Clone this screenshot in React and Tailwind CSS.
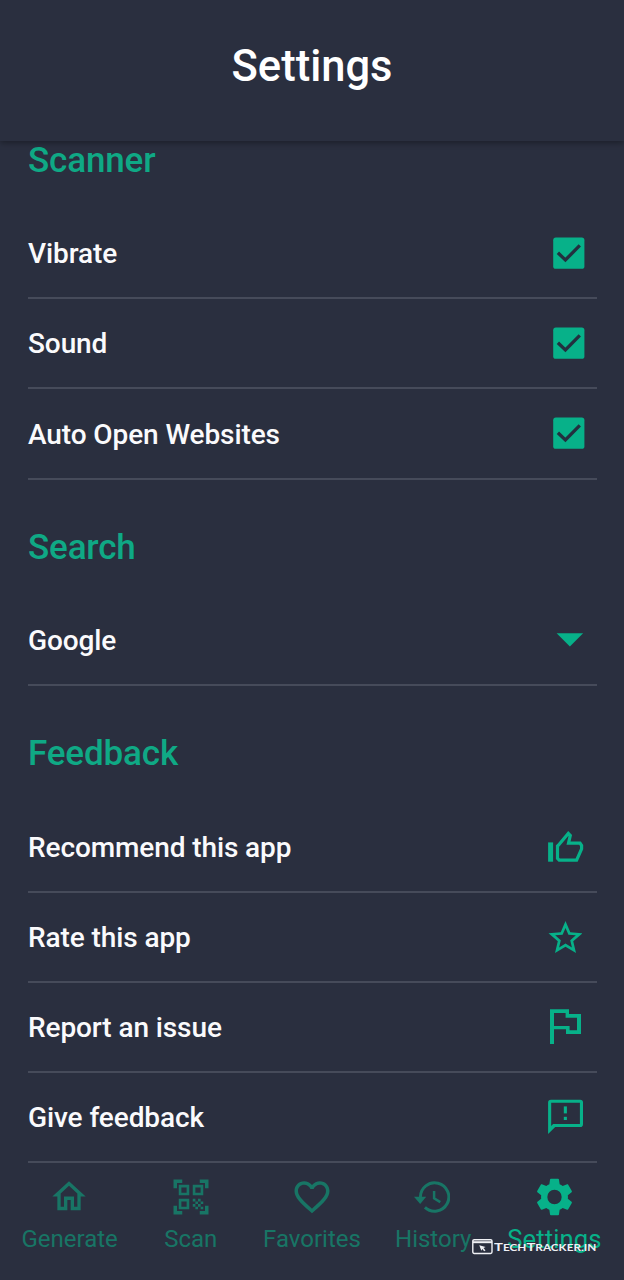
import React from "react";

function Icon({ box, className, children }) {
  return (
    <svg viewBox={box} className={className} fill="currentColor" preserveAspectRatio="none" aria-hidden="true">
      {children}
    </svg>
  );
}

const CheckBox = () => (
  <Icon box="0 0 32 32" className="mr-[12px] h-8 w-8">
    <rect x="0.2" y="0.6" width="31.2" height="31.2" rx="2.6" />
    <path d="M4.9 15.8L12.4 23L26.8 8.4" fill="none" stroke="#232f3f" strokeWidth="3.3" />
  </Icon>
);

const Caret = () => (
  <Icon box="0 0 28 14" className="mr-[13px] h-[14px] w-[28px]">
    <path d="M0.6 0.3H27.1L13.9 13.6Z" />
  </Icon>
);

const ThumbUp = () => (
  <Icon box="0 0 36 32" className="mr-[13px] h-8 w-9">
    <rect x="0.1" y="12.4" width="5" height="19.3" />
    <path
      d="M10.4 15.2L20.3 3.4L22.3 5.4L20.5 13.2H32L33.6 15.6V18.9L28.6 30.2H11.2L9.5 28.4V16Z"
      fill="none"
      stroke="currentColor"
      strokeWidth="3.2"
    />
  </Icon>
);

const Star = () => (
  <Icon box="1.7 2 20 19" className="mr-[15px] h-8 w-[34px]">
    <path d="M22 9.24l-7.19-.62L12 2 9.19 8.63 2 9.24l5.46 4.73L5.82 21 12 17.27 18.18 21l-1.63-7.03L22 9.24zM12 15.4l-3.76 2.27 1-4.28-3.32-2.88 4.38-.38L12 6.1l1.71 4.04 4.38.38-3.32 2.88 1 4.28L12 15.4z" />
  </Icon>
);

const Flag = () => (
  <Icon box="0 0 32 36" className="mr-[16px] h-9 w-8">
    <path
      fillRule="evenodd"
      d="M1 .2H20V5H32V25H17V20.3H5V35.1H1ZM5 4V17H20.6V21.3H28V8.7H16.6V4Z"
    />
  </Icon>
);

const Feedback = () => (
  <Icon box="0 0 36 36" className="mr-[13px] h-9 w-9">
    <path
      fillRule="evenodd"
      d="M3 .7H32.2Q35 .7 35 3.5V25.3Q35 28.1 32.2 28.1H7.2L.1 35V3.5Q.1 .7 3 .7ZM3.2 3.7V27L5.1 25.1H31.9V3.7Z"
    />
    <rect x="15.8" y="7.4" width="3.1" height="7" />
    <rect x="15.8" y="17.8" width="3.1" height="3.2" />
  </Icon>
);

const Home = () => (
  <Icon box="0 0 24 24" className="mr-[1px] mb-[1px] h-[41px] w-[40px]">
    <path d="M12 5.69l5 4.5V18h-2v-6H9v6H7v-7.81l5-4.5M12 3L2 12h3v8h6v-6h2v6h6v-8h3L12 3z" />
  </Icon>
);

const QrScan = () => (
  <Icon box="0 0 24 24" className="mb-[1px] h-[42px] w-[42px]">
    <path d="M9.5 6.5v3h-3v-3h3M11 5H5v6h6V5zm-1.5 9.5v3h-3v-3h3M11 13H5v6h6v-6zm6.5-6.5v3h-3v-3h3M19 5h-6v6h6V5zm-6 8h1.5v1.5H13V13zm1.5 1.5H16V16h-1.5v-1.5zM16 13h1.5v1.5H16V13zm-3 3h1.5v1.5H13V16zm1.5 1.5H16V19h-1.5v-1.5zM16 16h1.5v1.5H16V16zm1.5-1.5H19V16h-1.5v-1.5zm0 3H19V19h-1.5v-1.5zM22 7h-2V4h-3V2h5v5zm0 15v-5h-2v3h-3v2h5zM2 22h5v-2H4v-3H2v5zM2 2v5h2V4h3V2H2z" />
  </Icon>
);

const Heart = () => (
  <Icon box="0 0 24 24" className="mb-[1px] h-[42px] w-[42px]">
    <path d="M16.5 3c-1.74 0-3.41.81-4.5 2.09C10.91 3.81 9.24 3 7.5 3 4.42 3 2 5.42 2 8.5c0 3.78 3.4 6.86 8.55 11.54L12 21.35l1.45-1.32C18.6 15.36 22 12.28 22 8.5 22 5.42 19.58 3 16.5 3zm-4.4 15.55l-.1.1-.1-.1C7.14 14.24 4 11.39 4 8.5 4 6.5 5.5 5 7.5 5c1.54 0 3.04.99 3.57 2.36h1.87C13.46 5.99 14.96 5 16.5 5c2 0 3.5 1.5 3.5 3.5 0 2.89-3.14 5.74-7.9 10.05z" />
  </Icon>
);

const History = () => (
  <Icon box="0 0 36 36" className="mr-[2px] mb-[1px] h-9 w-9">
    <path d="M6.4 18.1A14.2 14.2 0 1 1 10.9 28.4" fill="none" stroke="currentColor" strokeWidth="3" />
    <path d="M0 17.8H12.2L6.2 25Z" />
    <path d="M20.1 12V19.4L26.3 23.1" fill="none" stroke="currentColor" strokeWidth="2.5" />
  </Icon>
);

const Gear = () => (
  <Icon box="0 0 24 24" className="h-[44px] w-[43px]">
    <path
      fillRule="evenodd"
      d="M19.43 12.98c.04-.32.07-.64.07-.98s-.03-.66-.07-.98l2.11-1.65c.19-.15.24-.42.12-.64l-2-3.46c-.12-.22-.39-.3-.61-.22l-2.49 1c-.52-.4-1.08-.73-1.69-.98l-.38-2.65C14.46 2.18 14.25 2 14 2h-4c-.25 0-.46.18-.49.42l-.38 2.65c-.61.25-1.17.59-1.69.98l-2.49-1c-.23-.09-.49 0-.61.22l-2 3.46c-.13.22-.07.49.12.64l2.11 1.65c-.04.32-.07.65-.07.98s.03.66.07.98l-2.11 1.65c-.19.15-.24.42-.12.64l2 3.46c.12.22.39.3.61.22l2.49-1c.52.4 1.08.73 1.69.98l.38 2.65c.03.24.24.42.49.42h4c.25 0 .46-.18.49-.42l.38-2.65c.61-.25 1.17-.59 1.69-.98l2.49 1c.23.09.49 0 .61-.22l2-3.46c.12-.22.07-.49-.12-.64l-2.11-1.65zM12 16a4 4 0 1 1 0-8 4 4 0 0 1 0 8z"
    />
  </Icon>
);

function Heading({ children, first }) {
  return (
    <h2
      className={
        (first ? "h-[68px] " : "h-[116.3px] ") +
        "flex items-end pb-[27px] text-[35px] leading-[42px] font-medium tracking-[-0.15px] text-[#0fa985]"
      }
    >
      {children}
    </h2>
  );
}

function Row({ label, children }) {
  return (
    <div className="flex h-[90.2px] items-center justify-between border-b-2 border-[#464b5a] text-[#07b189]">
      <span className="pt-[2.4px] text-[28px] leading-8 font-medium tracking-[-0.1px] text-[#fafafc]">{label}</span>
      {children}
    </div>
  );
}

function Tab({ label, active, children }) {
  return (
    <div className={"flex flex-col items-center " + (active ? "text-[#07b189]" : "text-[#187565]")}>
      <div className="flex h-[44px] items-center">{children}</div>
      <span
        className={
          "mt-[6px] leading-7 whitespace-nowrap " +
          (active ? "text-[25.6px] tracking-[0.1px]" : "text-[24px]")
        }
      >
        {label}
      </span>
    </div>
  );
}

function Watermark() {
  return (
    <div className="absolute top-[1238px] left-[472px] flex items-center gap-[1px] text-[#f0f1f5]">
      <svg viewBox="0 0 21 16" className="h-4 w-[21px]" fill="none" stroke="currentColor" aria-hidden="true">
        <rect x="0.8" y="0.7" width="19.2" height="13.8" rx="1.4" strokeWidth="1.4" fill="#2a2f3f" />
        <path d="M1 3.2H20" strokeWidth="2" />
        <path d="M7.3 6.3L13.6 8.1L11.5 9.1L13.5 11.5L12.1 12.3L10.4 10.1L9.3 11.8Z" fill="currentColor" stroke="none" />
      </svg>
      <span className="origin-left scale-x-[1.24] pt-px font-['Lato',sans-serif] text-[12px] leading-4 font-bold whitespace-nowrap">
        T<span className="text-[9.5px]">ECH</span>T<span className="text-[9.5px]">RACKER.IN</span>
      </span>
    </div>
  );
}

export default function App() {
  return (
    <div className="relative flex h-[1280px] w-[624px] flex-col overflow-hidden bg-[#2a2f3f] font-['Roboto',sans-serif]">
      <header className="relative z-10 flex h-[141px] shrink-0 justify-center bg-[#2a2f3f] pt-[41px] shadow-[0_2px_6px_rgba(0,0,0,0.35)]">
        <h1 className="text-[43.5px] leading-[52px] font-medium text-white">Settings</h1>
      </header>
      <main className="shrink-0 pr-[27px] pl-[28px]">
        <Heading first>Scanner</Heading>
        <Row label="Vibrate"><CheckBox /></Row>
        <Row label="Sound"><CheckBox /></Row>
        <Row label="Auto Open Websites"><CheckBox /></Row>
        <Heading>Search</Heading>
        <Row label="Google"><Caret /></Row>
        <Heading>Feedback</Heading>
        <Row label="Recommend this app"><ThumbUp /></Row>
        <Row label="Rate this app"><Star /></Row>
        <Row label="Report an issue"><Flag /></Row>
        <Row label="Give feedback"><Feedback /></Row>
      </main>
      <nav className="grid grid-cols-5 px-[9px] pt-[12px]">
        <Tab label="Generate"><Home /></Tab>
        <Tab label="Scan"><QrScan /></Tab>
        <Tab label="Favorites"><Heart /></Tab>
        <Tab label="History"><History /></Tab>
        <Tab label="Settings" active><Gear /></Tab>
      </nav>
      <Watermark />
    </div>
  );
}
